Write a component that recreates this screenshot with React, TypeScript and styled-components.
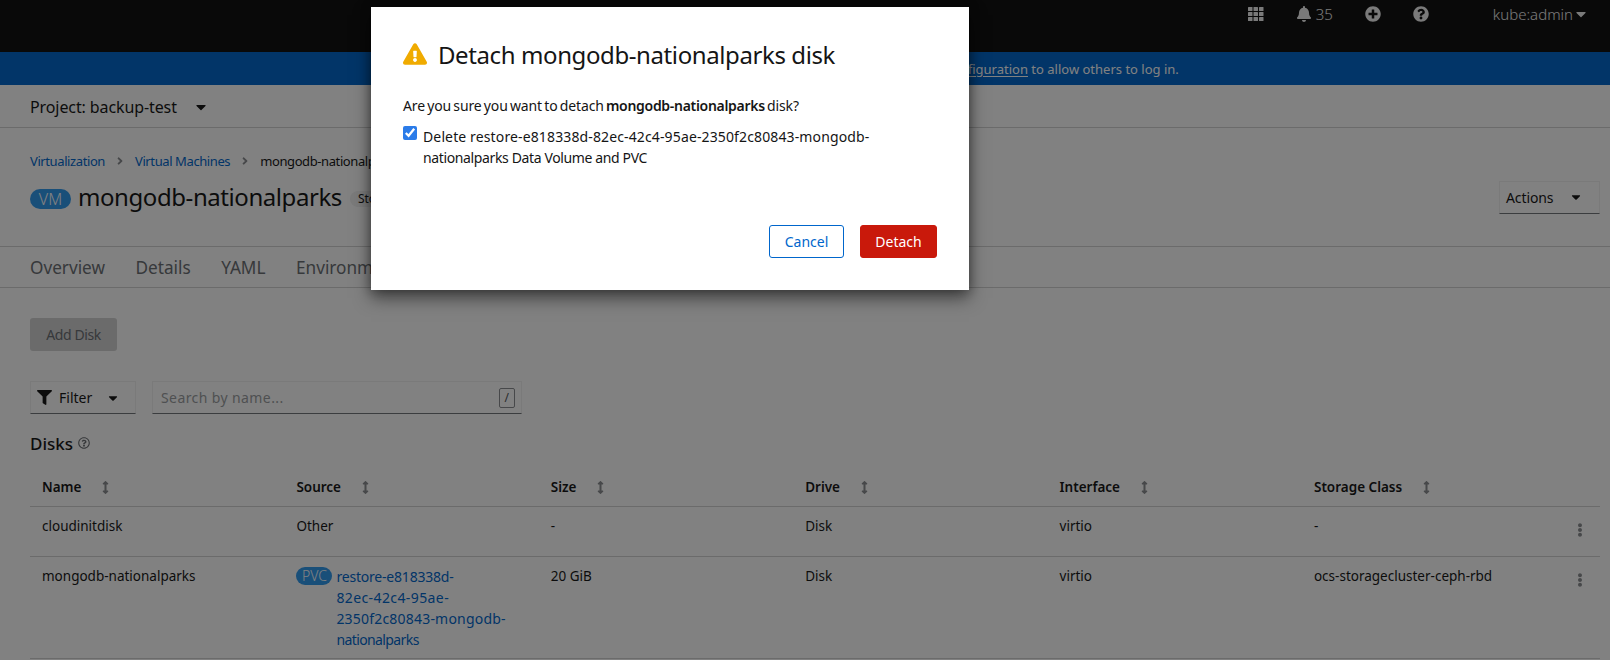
import styled, { createGlobalStyle } from 'styled-components';
import {
  FaAngleRight,
  FaArrowsAltV,
  FaBell,
  FaCaretDown,
  FaEllipsisV,
  FaExclamationTriangle,
  FaFilter,
  FaPlusCircle,
  FaQuestionCircle,
  FaRegQuestionCircle,
} from 'react-icons/fa';

const FONT = '"Noto Sans", "Open Sans", "Liberation Sans", sans-serif';

const GlobalStyle = createGlobalStyle`
  html, body {
    margin: 0;
    padding: 0;
    height: 660px;
    overflow: hidden;
    background: #fff;
    font-family: ${FONT};
    font-size: 14px;
    color: #151515;
  }
  * {
    box-sizing: border-box;
  }
`;

const Page = styled.div`
  position: relative;
  width: 1610px;
  height: 660px;
  overflow: hidden;
`;

const Masthead = styled.header`
  display: flex;
  justify-content: flex-end;
  height: 52px;
  padding: 4px 21px 0 0;
  background: #0e0e0e;
  color: #f0f0f0;
`;

const MastItem = styled.span<{ $gap?: number; $right?: number }>`
  display: flex;
  align-items: center;
  gap: ${(p) => p.$gap ?? 0}px;
  height: 20px;
  margin-right: ${(p) => p.$right ?? 0}px;
  font-size: 15px;
  font-weight: 300;
`;

const GridIcon = () => (
  <svg width="16" height="14" viewBox="0 0 16 14" fill="#f0f0f0">
    {[0, 5.5, 11].map((x) =>
      [0, 5, 10].map((y) => <rect key={`${x}-${y}`} x={x} y={y} width="4.5" height="4" rx="0.5" />),
    )}
  </svg>
);

const Banner = styled.div`
  display: flex;
  justify-content: center;
  align-items: center;
  height: 33px;
  padding-left: 28px;
  background: #0066cc;
  color: #fff;
  font-size: 13px;
  white-space: nowrap;

  u {
    text-underline-offset: 2px;
  }
`;

const ProjectBar = styled.div`
  display: flex;
  align-items: center;
  gap: 16px;
  height: 43px;
  padding: 2px 0 0 30px;
  border-bottom: 1px solid #d2d2d2;
  font-size: 16px;
  letter-spacing: -0.1px;
`;

const PageHeader = styled.div`
  height: 118px;
  padding: 23px 10px 0 30px;
`;

const Breadcrumb = styled.nav`
  display: flex;
  align-items: center;
  height: 20px;
  font-size: 13px;
  letter-spacing: -0.4px;
  white-space: nowrap;
`;

const Crumb = styled.a`
  color: #0066cc;
`;

const CrumbSep = styled.span`
  display: flex;
  margin: 0 9px;
  color: #8a8d90;
  font-size: 12px;
`;

const TitleRow = styled.div`
  display: flex;
  align-items: center;
  margin-top: 8px;
  height: 36px;
`;

const ResourceBadge = styled.span<{ $large?: boolean }>`
  display: inline-flex;
  flex: none;
  justify-content: center;
  align-items: center;
  width: ${(p) => (p.$large ? 41 : 36)}px;
  height: ${(p) => (p.$large ? 20 : 18)}px;
  margin-top: ${(p) => (p.$large ? 3 : 0)}px;
  border-radius: 10px;
  background: #2f9aef;
  color: #fff;
  font-size: ${(p) => (p.$large ? 16 : 14)}px;
  font-weight: 300;
`;

const Title = styled.h1`
  margin: -2px 8px 0 7px;
  font-size: 24px;
  font-weight: 400;
  letter-spacing: -0.43px;
  white-space: nowrap;
`;

const StatusPill = styled.span`
  margin-top: 4px;
  padding: 0 8px;
  height: 16px;
  line-height: 16px;
  border-radius: 8px;
  background: #f0f0f0;
  font-size: 12px;
`;

const Dropdown = styled.div<{ $width: number; $gap: number }>`
  display: flex;
  align-items: center;
  gap: ${(p) => p.$gap}px;
  width: ${(p) => p.$width}px;
  height: 33px;
  padding: 0 6px;
  border: 1px solid #f0f0f0;
  border-bottom-color: #72767b;
  font-size: 14px;
`;

const ActionsDropdown = styled(Dropdown)`
  margin-left: auto;
  letter-spacing: -0.1px;
`;

const FilterCaret = styled(FaCaretDown)`
  margin-left: 7px;
`;

const Tabs = styled.div`
  display: flex;
  gap: 30.5px;
  align-items: center;
  height: 42px;
  padding-left: 30px;
  border-top: 1px solid #d2d2d2;
  border-bottom: 1px solid #d2d2d2;
  color: #6a6e73;
  font-size: 17.2px;
  white-space: nowrap;
`;

const Content = styled.main`
  padding: 30px 10px 0 30px;
`;

const AddDisk = styled.button`
  display: block;
  width: 87px;
  height: 33px;
  padding: 0;
  border: none;
  border-radius: 3px;
  background: #d2d2d2;
  color: #6a6e73;
  font-family: inherit;
  font-size: 14px;
  letter-spacing: -0.4px;
`;

const FilterRow = styled.div`
  display: flex;
  gap: 16px;
  margin-top: 30px;
`;

const SearchBox = styled.div`
  display: flex;
  justify-content: space-between;
  align-items: center;
  width: 370px;
  height: 33px;
  padding: 0 6px 0 8px;
  border: 1px solid #f0f0f0;
  border-bottom-color: #72767b;
  color: #9a9da0;
  font-size: 14px;
  letter-spacing: 0.4px;
`;

const SlashKey = styled.span`
  display: flex;
  justify-content: center;
  align-items: center;
  width: 16px;
  height: 20px;
  border: 1px solid #8a8d90;
  border-radius: 2px;
  font-size: 12px;
  color: #4f5255;
`;

const SectionTitle = styled.h2`
  display: flex;
  align-items: center;
  gap: 5px;
  height: 24px;
  margin: 17px 0 0;
  font-size: 17px;
  font-weight: 500;
`;

const HelpIcon = styled.span`
  display: flex;
  color: #6a6e73;
  font-size: 12px;
`;

const DiskTable = styled.table`
  width: 1570px;
  margin-top: 13px;
  border-collapse: collapse;
  table-layout: fixed;
`;

const HeadCell = styled.th`
  width: 254.4px;
  height: 38px;
  padding: 0 12px;
  border-bottom: 1px solid #d2d2d2;
  font-size: 13.5px;
  font-weight: 600;
  text-align: left;
`;

const KebabHead = styled(HeadCell)`
  width: 43.6px;
`;

const SortIcon = styled.span`
  display: inline-flex;
  margin-left: 18px;
  color: #8a8d90;
  font-size: 13px;
  vertical-align: -2px;
`;

const Row = styled.tr`
  border-bottom: 1px solid #d2d2d2;
`;

const Cell = styled.td`
  height: 50px;
  padding: 9px 12px 0;
  font-size: 13.5px;
  line-height: 21px;
  vertical-align: top;
`;

const KebabCell = styled(Cell)`
  padding: 14px 0 0 17px;
  color: #8a8d90;
  font-size: 14px;
`;

const SourceLink = styled.div`
  display: flex;
  gap: 4px;
  align-items: flex-start;
  padding-bottom: 8px;
`;

const SourceBadgeSlot = styled.span`
  display: flex;
  margin-top: 1px;
`;

const LinkText = styled.a`
  color: #0066cc;
  font-size: 14px;
  white-space: nowrap;
`;

const Spaced = styled.span<{ $ls: number }>`
  letter-spacing: ${(p) => p.$ls}px;
`;

const Overlay = styled.div`
  position: absolute;
  inset: 0;
  background: rgba(3, 3, 3, 0.5);
`;

const Modal = styled.div`
  position: absolute;
  top: 7px;
  left: 371px;
  width: 598px;
  height: 283px;
  padding: 35px 32px 0;
  background: #fff;
  box-shadow: 0 8px 16px rgba(3, 3, 3, 0.5), 0 0 10px rgba(3, 3, 3, 0.3);
`;

const ModalTitle = styled.h1`
  display: flex;
  align-items: center;
  gap: 11px;
  height: 24px;
  margin: 0;
  font-size: 24px;
  font-weight: 400;
  letter-spacing: -0.4px;
  white-space: nowrap;
  color: #151515;

  svg {
    color: #f0ab00;
    font-size: 24px;
  }
`;

const ModalText = styled.p`
  margin: 29px 0 0;
  font-size: 14px;
  line-height: 21px;
  letter-spacing: -0.1px;
  word-spacing: -1.4px;

  b {
    font-weight: 600;
    letter-spacing: -0.3px;
  }
`;

const CheckLabel = styled.label`
  display: flex;
  gap: 6px;
  margin-top: 10px;
  font-size: 14px;
  line-height: 21px;
`;

const Check = styled.input`
  flex: none;
  width: 14px;
  height: 14px;
  margin: 0;
  accent-color: #2b7ce9;
`;

const ModalFooter = styled.div`
  display: flex;
  justify-content: flex-end;
  gap: 16px;
  margin-top: 57px;
`;

const ModalButton = styled.button<{ $danger?: boolean }>`
  width: ${(p) => (p.$danger ? 77 : 75)}px;
  height: 33px;
  padding: 0;
  border: 1px solid ${(p) => (p.$danger ? '#c9190b' : '#0066cc')};
  border-radius: 3px;
  background: ${(p) => (p.$danger ? '#c9190b' : '#fff')};
  color: ${(p) => (p.$danger ? '#fff' : '#0066cc')};
  font-family: inherit;
  font-size: 14px;
`;

const HEADERS = ['Name', 'Source', 'Size', 'Drive', 'Interface', 'Storage Class'];

function App() {
  return (
    <Page>
      <GlobalStyle />
      <Masthead>
        <MastItem $right={32}>
          <GridIcon />
        </MastItem>
        <MastItem $right={32} $gap={4}>
          <FaBell size={16} /> 35
        </MastItem>
        <MastItem $right={32}>
          <FaPlusCircle size={16} />
        </MastItem>
        <MastItem $right={64}>
          <FaQuestionCircle size={16} />
        </MastItem>
        <MastItem>
          kube:admin <FaCaretDown size={16} />
        </MastItem>
      </Masthead>
      <Banner>
        You are logged in as a temporary administrative user. Update the&nbsp;<u>cluster OAuth configuration</u>&nbsp;to allow others to log in.
      </Banner>
      <ProjectBar>
        Project: backup-test <FaCaretDown size={16} />
      </ProjectBar>
      <PageHeader>
        <Breadcrumb>
          <Crumb>Virtualization</Crumb>
          <CrumbSep>
            <FaAngleRight />
          </CrumbSep>
          <Crumb>Virtual Machines</Crumb>
          <CrumbSep>
            <FaAngleRight />
          </CrumbSep>
          mongodb-nationalparks
        </Breadcrumb>
        <TitleRow>
          <ResourceBadge $large>VM</ResourceBadge>
          <Title>mongodb-nationalparks</Title>
          <StatusPill>Stopped</StatusPill>
          <ActionsDropdown $width={101} $gap={16}>
            Actions <FaCaretDown size={14} />
          </ActionsDropdown>
        </TitleRow>
      </PageHeader>
      <Tabs>
        <span>Overview</span>
        <span>Details</span>
        <span>YAML</span>
        <span>Environment</span>
        <span>Events</span>
        <span>Console</span>
        <span>Disks</span>
      </Tabs>
      <Content>
        <AddDisk>Add Disk</AddDisk>
        <FilterRow>
          <Dropdown $width={106} $gap={7}>
            <FaFilter size={15} /> Filter
            <FilterCaret size={14} />
          </Dropdown>
          <SearchBox>
            Search by name...
            <SlashKey>/</SlashKey>
          </SearchBox>
        </FilterRow>
        <SectionTitle>
          Disks
          <HelpIcon>
            <FaRegQuestionCircle />
          </HelpIcon>
        </SectionTitle>
        <DiskTable>
          <thead>
            <tr>
              {HEADERS.map((h) => (
                <HeadCell key={h}>
                  {h}
                  <SortIcon>
                    <FaArrowsAltV />
                  </SortIcon>
                </HeadCell>
              ))}
              <KebabHead />
            </tr>
          </thead>
          <tbody>
            <Row>
              <Cell>cloudinitdisk</Cell>
              <Cell>Other</Cell>
              <Cell>-</Cell>
              <Cell>Disk</Cell>
              <Cell>virtio</Cell>
              <Cell>-</Cell>
              <KebabCell>
                <FaEllipsisV />
              </KebabCell>
            </Row>
            <Row>
              <Cell>mongodb-nationalparks</Cell>
              <Cell>
                <SourceLink>
                  <SourceBadgeSlot>
                    <ResourceBadge>PVC</ResourceBadge>
                  </SourceBadgeSlot>
                  <LinkText>
                    <Spaced $ls={-0.2}>restore-e818338d-</Spaced>
                    <br />
                    <Spaced $ls={0.4}>82ec-42c4-95ae-</Spaced>
                    <br />
                    <Spaced $ls={0.2}>2350f2c80843-mongodb-</Spaced>
                    <br />
                    <Spaced $ls={-0.6}>nationalparks</Spaced>
                  </LinkText>
                </SourceLink>
              </Cell>
              <Cell>20 GiB</Cell>
              <Cell>Disk</Cell>
              <Cell>virtio</Cell>
              <Cell>ocs-storagecluster-ceph-rbd</Cell>
              <KebabCell>
                <FaEllipsisV />
              </KebabCell>
            </Row>
          </tbody>
        </DiskTable>
      </Content>
      <Overlay />
      <Modal>
        <ModalTitle>
          <FaExclamationTriangle />
          Detach mongodb-nationalparks disk
        </ModalTitle>
        <ModalText>
          Are you sure you want to detach <b>mongodb-nationalparks</b> disk?
        </ModalText>
        <CheckLabel>
          <Check type="checkbox" defaultChecked />
          <span>
            <Spaced $ls={0.13}>Delete restore-e818338d-82ec-42c4-95ae-2350f2c80843-mongodb-</Spaced>
            <Spaced $ls={-0.37}>nationalparks Data Volume and PVC</Spaced>
          </span>
        </CheckLabel>
        <ModalFooter>
          <ModalButton>Cancel</ModalButton>
          <ModalButton $danger>Detach</ModalButton>
        </ModalFooter>
      </Modal>
    </Page>
  );
}

export default App;
